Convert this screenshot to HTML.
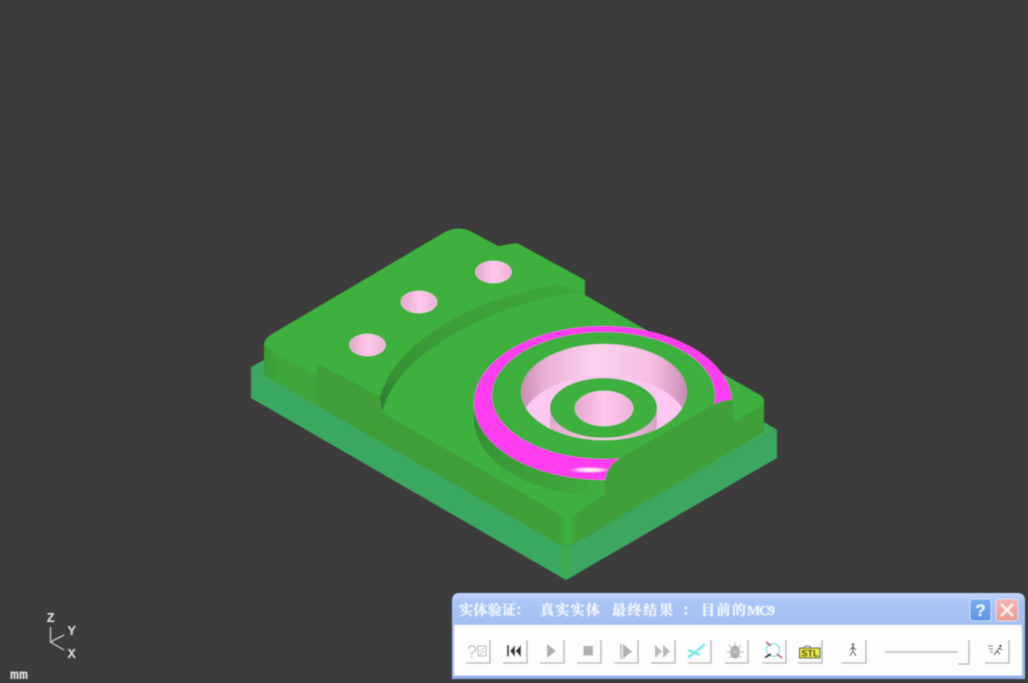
<!DOCTYPE html>
<html lang="zh">
<head>
<meta charset="utf-8">
<title>实体验证</title>
<style>
html,body{margin:0;padding:0;background:#3d3c3d;width:1028px;height:683px;overflow:hidden}
svg{display:block;position:absolute;left:0;top:0}
.ax{font:bold 14px "Liberation Mono",monospace;fill:#dcdcdc}
.tt{font:bold 14px "Liberation Serif","Noto Serif CJK SC",serif;fill:#f2f6ff;stroke:#f2f6ff;stroke-width:.25}
</style>
</head>
<body>
<svg width="1028" height="683" viewBox="0 0 1028 683" xmlns="http://www.w3.org/2000/svg">
<defs>
<linearGradient id="pw" x1="0" x2="1" y1="0" y2="0">
<stop offset="0" stop-color="#c98db4"/><stop offset=".14" stop-color="#eab0d4"/><stop offset=".45" stop-color="#fdd2ee"/><stop offset=".8" stop-color="#f4bde0"/><stop offset="1" stop-color="#c98db4"/>
</linearGradient>
<linearGradient id="ph" x1="0" x2="1" y1="0" y2="0">
<stop offset="0" stop-color="#e6a4cc"/><stop offset=".5" stop-color="#ffc8ec"/><stop offset="1" stop-color="#eeb0d6"/>
</linearGradient>
<linearGradient id="bw" x1="0" x2="1" y1="0" y2="0">
<stop offset="0" stop-color="#e3a8cc"/><stop offset=".5" stop-color="#fbd0ea"/><stop offset="1" stop-color="#d9a0c4"/>
</linearGradient>
<linearGradient id="cres" x1="0" x2="1" y1="0" y2="0">
<stop offset="0" stop-color="#358c35"/><stop offset=".1" stop-color="#3b9a38"/><stop offset=".35" stop-color="#3fa53a"/><stop offset=".5" stop-color="#3cb03c"/>
</linearGradient>
<linearGradient id="cor" x1="0" x2="1" y1="0" y2="0">
<stop offset="0" stop-color="#3f9f37"/><stop offset=".5" stop-color="#3db43b"/><stop offset="1" stop-color="#3f9f37"/>
</linearGradient>
<linearGradient id="cor2" x1="0" x2="1" y1="0" y2="0">
<stop offset="0" stop-color="#3aa85e"/><stop offset=".5" stop-color="#3bae50"/><stop offset="1" stop-color="#3da660"/>
</linearGradient>
<linearGradient id="lw" x1="0" x2="1" y1="0" y2="0">
<stop offset="0" stop-color="#3b9a38"/><stop offset=".3" stop-color="#3fa93b"/><stop offset="1" stop-color="#3fa53a"/>
</linearGradient>
<linearGradient id="arc" x1="0" x2="1" y1="1" y2="0">
<stop offset="0" stop-color="#2a7736"/><stop offset=".18" stop-color="#379236"/><stop offset=".5" stop-color="#3d9f38"/><stop offset="1" stop-color="#3ea83a"/>
</linearGradient>
<radialGradient id="hl" cx=".5" cy=".5" r=".5">
<stop offset="0" stop-color="#fff"/><stop offset=".5" stop-color="#ffc8f4"/><stop offset="1" stop-color="#ff44ee" stop-opacity="0"/>
</radialGradient>
<linearGradient id="title" x1="0" x2="0" y1="0" y2="1">
<stop offset="0" stop-color="#c0d4fa"/><stop offset=".3" stop-color="#a8c4f4"/><stop offset="1" stop-color="#a4c0f2"/>
</linearGradient>
<linearGradient id="help" x1="0" x2="0" y1="0" y2="1">
<stop offset="0" stop-color="#7cacf0"/><stop offset="1" stop-color="#5f94e6"/>
</linearGradient>
<linearGradient id="close" x1="0" x2="0" y1="0" y2="1">
<stop offset="0" stop-color="#f4b4aa"/><stop offset="1" stop-color="#ec9c94"/>
</linearGradient>
<clipPath id="hole"><ellipse cx="604" cy="392" rx="83" ry="48"/></clipPath>
<filter id="soft" x="-2%" y="-5%" width="104%" height="110%"><feGaussianBlur stdDeviation="0.45"/></filter>
</defs>

<rect width="1028" height="683" fill="#3d3c3d"/>

<g filter="url(#soft)">
<!-- base plate -->
<polygon points="251,367 264,360 764,422 777,430 566,548" fill="#3ba85c"/>
<polygon points="251,367 566,548 566,580 251,398" fill="#3aa85e"/>
<polygon points="566,548 777,430 777,458 566,580" fill="#3da660"/>
<polygon points="558,543.500 566,548 575,543 575,575 566,580 558,575.400" fill="url(#cor2)"/>

<!-- body walls -->
<path d="M264,345 L264,375 L557,543 Q567,549 578,541 L764,432 L764,400 Z" fill="#3f9f37"/>
<polygon points="264,345 317,375 317,406 264,375" fill="url(#lw)"/>
<polygon points="557,513 578,513 578,541 567,545 557,543" fill="url(#cor)"/>

<!-- top face -->
<path d="M264,345 Q264,339 272,334 L445,232 Q458,225 472,232 L498,246 L517,243 L585,280 L585,295 L760,395 Q767,400 762,406 L733,423 L578,513 Q567,519 557,513 L381,412 L380,397 L317,363 L317,375 L267,348 Q264,347 264,345 Z" fill="#3cb03c"/>

<!-- arc step -->
<path d="M380,397 C388,372 402,352 440,327 C470,308 510,293 558,284 L585,292 C550,295 520,303 490,316 C440,338 394,368 382,412 Z" fill="url(#arc)"/>

<!-- small holes -->
<g stroke="#f0dfe9" stroke-width=".5">
<ellipse cx="367.500" cy="345" rx="18" ry="11" fill="url(#ph)"/>
<ellipse cx="419" cy="302" rx="18" ry="11" fill="url(#ph)"/>
<ellipse cx="493.500" cy="272" rx="18" ry="11" fill="url(#ph)"/>
</g>

<!-- big recess -->
<ellipse cx="603" cy="419" rx="129" ry="77" fill="url(#cres)"/>
<ellipse cx="603" cy="403" rx="129" ry="77" fill="#ff3cf0"/>
<ellipse cx="590" cy="470" rx="24" ry="3.500" fill="url(#hl)"/>
<ellipse cx="603.500" cy="395.500" rx="111.500" ry="63.500" fill="#3cb03c"/>

<!-- hole -->
<ellipse cx="604" cy="392" rx="83" ry="48" fill="url(#pw)"/>
<g clip-path="url(#hole)">
<ellipse cx="604" cy="424" rx="83" ry="48" fill="#fcc8f2"/>
<ellipse cx="603.500" cy="423" rx="53.500" ry="30" fill="url(#bw)"/>
<rect x="550" y="408" width="107" height="15" fill="url(#bw)"/>
</g>
<ellipse cx="603.500" cy="408" rx="53.500" ry="30" fill="#3cb03c"/>
<ellipse cx="604" cy="408.500" rx="29" ry="17.500" fill="url(#ph)" stroke="#ece0e8" stroke-width=".5"/>

<!-- right raised block -->
<path d="M605,494 L605,482 Q606,468 617,460 L715,404 Q725,399 733,400 L733,423 L764,405 L764,432 L578,541 L578,513 Z" fill="#3f9f37"/>
</g>

<!-- axis triad -->
<g filter="url(#soft)">
<g stroke="#c8c8c8" stroke-width="1.300" fill="none">
<path d="M50.500,627 L50.500,642 L64,635 M50.500,642 L64,650"/>
</g>
<text class="ax" x="46.500" y="622">Z</text>
<text class="ax" x="67.500" y="635">Y</text>
<text class="ax" x="67.500" y="658">X</text>
<text x="10" y="679" textLength="18" lengthAdjust="spacingAndGlyphs" style="font:bold 13px 'DejaVu Sans Mono',monospace;fill:#e8e8e8">mm</text>
</g>

<!-- dialog -->
<g filter="url(#soft)">
<path d="M452,679 L452,601 Q452,593 460,593 L1017,593 Q1025,593 1025,601 L1025,679 Z" fill="#9fb8ee"/>
<path d="M452,601 Q452,593 460,593 L1017,593 Q1025,593 1025,601 L1025,625 L452,625 Z" fill="url(#title)"/>
<rect x="454" y="625" width="568" height="50.500" fill="#fdfdfd"/>
<rect x="452" y="676" width="573" height="3" fill="#97aee6"/>

<text class="tt" x="459" y="615" textLength="57" lengthAdjust="spacing">实体验证</text>
<text class="tt" x="515" y="615">：</text>
<text class="tt" x="540" y="615" textLength="60" lengthAdjust="spacing">真实实体</text>
<text class="tt" x="612" y="615" textLength="61" lengthAdjust="spacing">最终结果</text>
<text class="tt" x="682" y="615">：</text>
<text class="tt" x="701" y="615" textLength="45" lengthAdjust="spacing">目前的</text>
<text class="tt" x="747" y="615" textLength="28" lengthAdjust="spacing">MC9</text>

<!-- help / close -->
<rect x="970" y="599" width="21" height="22" rx="3" fill="url(#help)" stroke="#dce8fb" stroke-width=".8"/>
<text x="980.500" y="616" text-anchor="middle" style="font:bold 17px 'Liberation Sans',sans-serif;fill:#f2f7ff">?</text>
<rect x="996" y="599" width="22" height="22" rx="3" fill="url(#close)" stroke="#dce8fb" stroke-width=".8"/>
<path d="M1001,604 L1013,616 M1013,604 L1001,616" stroke="#fdf4f2" stroke-width="2.600" fill="none"/>

<!-- button chrome: right + bottom shadow -->
<g fill="none" stroke="#b0b0b0" stroke-width="1.300">
<path d="M490,640 L490,663 L466,663"/>
<path d="M527,640 L527,663 L503,663"/>
<path d="M564,640 L564,663 L540,663"/>
<path d="M601,640 L601,663 L577,663"/>
<path d="M638,640 L638,663 L614,663"/>
<path d="M675,640 L675,663 L651,663"/>
<path d="M711,640 L711,663 L688,663"/>
<path d="M748,640 L748,663 L725,663"/>
<path d="M786,640 L786,663 L762,663"/>
<path d="M822,640 L822,663 L798,663"/>
<path d="M866,640 L866,663 L842,663"/>
<path d="M969,640 L969,664 L958,664"/>
<path d="M1009,640 L1009,663 L985,663"/>
</g>

<!-- ?[] -->
<text x="467" y="658" style="font:18px 'Liberation Sans',sans-serif;fill:#c0c0c0">?</text>
<rect x="478" y="646" width="8" height="10" fill="none" stroke="#bcbcbc" stroke-width="1.100"/>
<path d="M480,651 L484,648 M480,655 L484,651" stroke="#c4c4c4" stroke-width="1"/>
<!-- rewind -->
<rect x="507" y="645" width="2" height="11.500" fill="#333"/>
<path d="M515,645 L510,651 L515,657 Z M521,645 L515.500,651 L521,657 Z" fill="#333"/>
<!-- play -->
<path d="M547,644 L556,651 L547,658 Z" fill="#b0b0b0"/>
<!-- stop -->
<rect x="583.500" y="646" width="9.500" height="9.500" fill="#b0b0b0"/>
<!-- step -->
<rect x="620" y="644" width="2" height="15" fill="#c4c4c4"/>
<path d="M623,644 L632,651.500 L623,659 Z" fill="#b0b0b0"/>
<!-- fast forward -->
<path d="M655,645 L662,651.500 L655,658 Z M663,645 L670,651.500 L663,658 Z" fill="#b8b8b8"/>
<!-- scissors cyan -->
<path d="M690,656 L697,651 L705,644 M688,650 L700,655" fill="none" stroke="#70e8ea" stroke-width="2.400"/>
<circle cx="689.500" cy="656.500" r="1.800" fill="#70e8ea"/>
<!-- bug gray -->
<ellipse cx="735" cy="652" rx="5" ry="6.500" fill="#a8a8a8"/>
<path d="M729,645 L741,658 M741,645 L729,658 M727,652 L744,652 M735,642 L735,646" stroke="#c0c0c0" stroke-width="1.200" fill="none"/>
<!-- zoom fit -->
<circle cx="773" cy="650" r="6.500" fill="none" stroke="#70dfe2" stroke-width="1.300"/>
<path d="M766,642 L771,646" stroke="#b04060" stroke-width="1.700"/>
<path d="M777,654 L782,658" stroke="#b04060" stroke-width="1.700"/>
<path d="M765,657.500 L771,654" stroke="#222" stroke-width="2"/>
<!-- STL -->
<rect x="799.500" y="648" width="20.500" height="10" fill="#e8e84a" stroke="#333" stroke-width="1.100"/>
<path d="M804,648 L805,646 L810,646 L811,648" fill="none" stroke="#666" stroke-width="1"/>
<text x="810" y="656.500" text-anchor="middle" style="font:bold 9px 'Liberation Sans',sans-serif;fill:#111">STL</text>
<!-- walker -->
<circle cx="853" cy="644.500" r="1.300" fill="#444"/>
<path d="M853,646 L853,651 L850,656 M853,651 L856,656 M850,650 L853,647 L856,650" fill="none" stroke="#444" stroke-width="1.100"/>
<!-- slider line -->
<path d="M885,652 L958,652" stroke="#a8a8a8" stroke-width="1.300"/>
<!-- runner -->
<circle cx="1000.500" cy="646" r="1.300" fill="#444"/>
<path d="M999,648 L997,651 L994,655 M997,651 L1000,654 M999,648 L1002,650 M988,646 L993,646 M989,649 L993,649 M990,652 L993,652" fill="none" stroke="#444" stroke-width="1.100"/>
</g>
</svg>
</body>
</html>
